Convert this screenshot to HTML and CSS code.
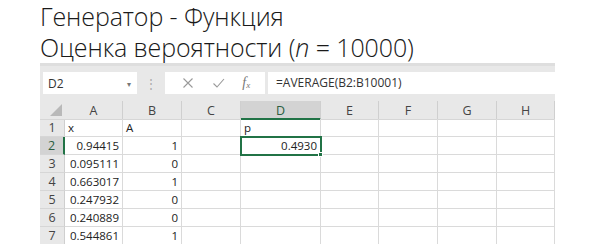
FILE: index.html
```html
<!DOCTYPE html>
<html lang="ru">
<head>
  <meta charset="UTF-8">
  <title>Генератор - Функция</title>
  <link rel="stylesheet" href="styles.css">
</head>
<body>
  <div class="slide">
    <h1 class="title">Генератор - Функция<br>Оценка вероятности (<i>n</i> = 10000)</h1>

    <div class="excel">
      <!-- formula bar -->
      <div class="bar">
        <div class="namebox">
          <span>D2</span>
          <span class="caret">&#9662;</span>
        </div>
        <div class="grip">&#8942;</div>
        <div class="actions">
          <svg class="ico" viewBox="0 0 12 12" width="12" height="12"><path d="M1.5 1.5l9 9M10.5 1.5l-9 9" stroke="#9a9a9a" stroke-width="1.1" fill="none"/></svg>
          <svg class="ico" viewBox="0 0 12 12" width="13" height="12"><path d="M1 6.5l3.5 3.5L11.5 2" stroke="#9a9a9a" stroke-width="1.1" fill="none"/></svg>
          <span class="fx"><i>f</i><sub>x</sub></span>
        </div>
        <div class="formula">=AVERAGE(B2:B10001)</div>
      </div>

      <!-- grid -->
      <div class="grid">
        <div class="hd corner"><span class="tri"></span></div>
        <div class="hd">A</div>
        <div class="hd">B</div>
        <div class="hd">C</div>
        <div class="hd sel-col">D</div>
        <div class="hd">E</div>
        <div class="hd">F</div>
        <div class="hd">G</div>
        <div class="hd">H</div>

        <div class="rn">1</div>
        <div class="c">x</div><div class="c">A</div><div class="c"></div><div class="c">p</div>
        <div class="c"></div><div class="c"></div><div class="c"></div><div class="c"></div>

        <div class="rn sel-row">2</div>
        <div class="c num">0.94415</div><div class="c num">1</div><div class="c"></div>
        <div class="c num active">0.4930<span class="handle"></span></div>
        <div class="c"></div><div class="c"></div><div class="c"></div><div class="c"></div>

        <div class="rn">3</div>
        <div class="c num">0.095111</div><div class="c num">0</div><div class="c"></div><div class="c"></div>
        <div class="c"></div><div class="c"></div><div class="c"></div><div class="c"></div>

        <div class="rn">4</div>
        <div class="c num">0.663017</div><div class="c num">1</div><div class="c"></div><div class="c"></div>
        <div class="c"></div><div class="c"></div><div class="c"></div><div class="c"></div>

        <div class="rn">5</div>
        <div class="c num">0.247932</div><div class="c num">0</div><div class="c"></div><div class="c"></div>
        <div class="c"></div><div class="c"></div><div class="c"></div><div class="c"></div>

        <div class="rn">6</div>
        <div class="c num">0.240889</div><div class="c num">0</div><div class="c"></div><div class="c"></div>
        <div class="c"></div><div class="c"></div><div class="c"></div><div class="c"></div>

        <div class="rn">7</div>
        <div class="c num">0.544861</div><div class="c num">1</div><div class="c"></div><div class="c"></div>
        <div class="c"></div><div class="c"></div><div class="c"></div><div class="c"></div>
      </div>
    </div>
  </div>
</body>
</html>
```

FILE: styles.css
```css
* { margin: 0; padding: 0; box-sizing: border-box; }
html, body {
  width: 591px;
  height: 244px;
  overflow: hidden;
  background: #fff;
}
body {
  font-family: 'Open Sans', sans-serif;
  color: #222;
}
.slide {
  padding: 1px 0 0 40px;
}
/* Title */
.title {
  font-weight: 300;
  font-size: 25px;
  line-height: 31px;
  color: #1a1a1a;
  letter-spacing: -0.1px;
  height: 62px;
}
.title i { font-style: italic; }

/* Spreadsheet */
.excel {
  width: 515px;
  background: #e8e8e8;
  border-top: 3px solid #dedede;
}
.bar {
  display: flex;
  align-items: center;
  height: 35px;
  padding: 6px 0 7px 3px;
}
.namebox {
  width: 94px;
  height: 22px;
  background: #fff;
  display: flex;
  align-items: center;
  justify-content: space-between;
  padding: 0 6px 0 5px;
  font-size: 12px;
  color: #333;
}
.caret {
  font-size: 8px;
  color: #777;
}
.grip {
  width: 28px;
  text-align: center;
  color: #aaa;
  font-size: 12px;
}
.actions {
  width: 100px;
  height: 22px;
  background: #fff;
  display: flex;
  align-items: center;
  justify-content: space-around;
  padding: 0 6px 0 8px;
}
.fx {
  font-family: 'Liberation Serif', serif;
  font-size: 14px;
  color: #777;
}
.fx sub { font-size: 9px; font-style: italic; vertical-align: -1px; }
.formula {
  flex: 1;
  height: 22px;
  margin-left: 3px;
  background: #fff;
  font-size: 12px;
  line-height: 22px;
  padding-left: 8px;
  color: #333;
}
.grid {
  display: grid;
  grid-template-columns: 25px 58px 59px 59px 80px 58px 59px 59px 58px;
  grid-auto-rows: 18px;
  background: #fff;
  font-size: 11.5px;
}
.hd {
  height: 19px;
  background: #e8e8e8;
  text-align: center;
  line-height: 19px;
  font-size: 12.5px;
  color: #444;
  border-right: 1px solid #cfcfcf;
  border-bottom: 1px solid #d6d6d6;
}
.corner {
  position: relative;
  border-right: none;
}
.tri {
  position: absolute;
  right: 3px;
  bottom: 3px;
  width: 0;
  height: 0;
  border-left: 12px solid transparent;
  border-bottom: 12px solid #b9b9b9;
}
.sel-col {
  background: #d3d3d3;
  color: #2c5e3f;
  border-bottom: 2px solid #217346;
}
.rn {
  background: #e8e8e8;
  text-align: center;
  line-height: 18px;
  font-size: 12.5px;
  color: #444;
  border-bottom: 1px solid #d6d6d6;
  border-right: 1px solid #cfcfcf;
}
.sel-row {
  background: #d3d3d3;
  color: #2c5e3f;
  border-right: 2px solid #217346;
}
.c {
  line-height: 17px;
  padding: 0 3px;
  border-right: 1px solid #dadada;
  border-bottom: 1px solid #dadada;
  white-space: nowrap;
  overflow: hidden;
}
.num { text-align: right; }
.active {
  position: relative;
  overflow: visible;
  outline: 2px solid #217346;
  outline-offset: -1px;
}
.handle {
  position: absolute;
  right: -3px;
  bottom: -3px;
  width: 5px;
  height: 5px;
  background: #217346;
  border: 1px solid #fff;
}
```
